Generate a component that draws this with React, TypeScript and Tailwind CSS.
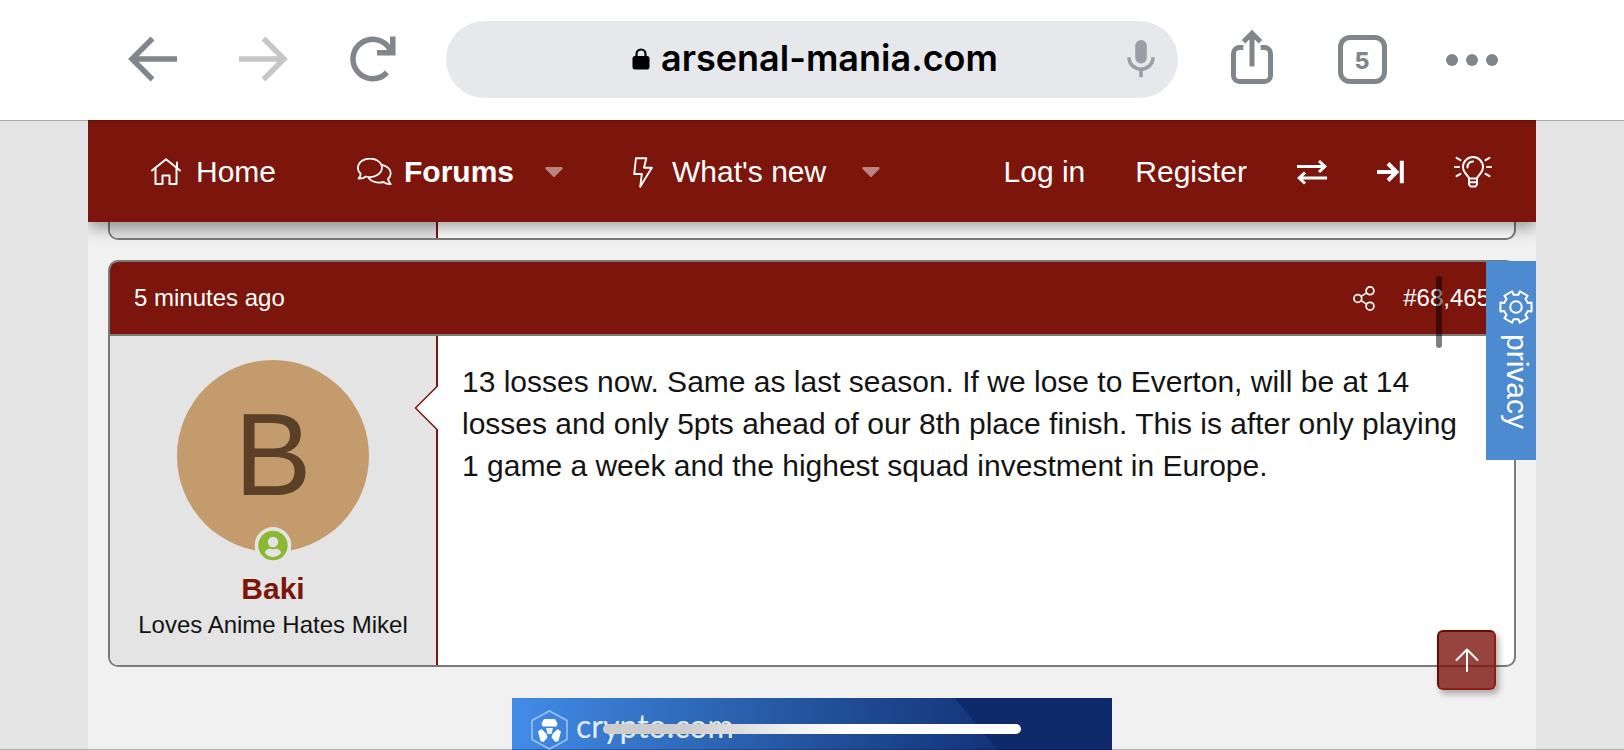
import { useState } from "react";

const MESSAGE =
  "13 losses now. Same as last season. If we lose to Everton, will be at 14 losses and only 5pts ahead of our 8th place finish. This is after only playing 1 game a week and the highest squad investment in Europe.";

// Six-toothed cog outline, one tooth every 60 degrees
const cogPoints = Array.from({ length: 6 })
  .flatMap((_, i) =>
    [
      [12.5, -19],
      [16.2, -16],
      [16.2, 16],
      [12.5, 19],
    ].map(([radius, offset]) => {
      const angle = ((i * 60 + offset) * Math.PI) / 180;
      return `${(17 + radius * Math.cos(angle)).toFixed(2)},${(17 + radius * Math.sin(angle)).toFixed(2)}`;
    })
  )
  .join(" ");

function Caret({ label }: { label: string }) {
  return (
    <button type="button" aria-label={label} className="cursor-pointer">
      <svg width="18" height="11" viewBox="0 0 18 11" fill="#bc8380" className="block">
        <path d="M1.5 0h15a1.2 1.2 0 0 1 .9 2L10 9.6a1.4 1.4 0 0 1-2 0L.6 2a1.2 1.2 0 0 1 .9-2z" />
      </svg>
    </button>
  );
}

function BrowserBar() {
  return (
    <header className="relative z-20 flex h-[120px] shrink-0 items-center bg-white pr-[97px] pb-[2px] pl-[98px] shadow-[0_1px_0_rgba(0,0,0,0.25)]">
      <button type="button" aria-label="Back" className="flex w-[110px] justify-center">
        <svg width="50" height="46" viewBox="0 0 50 46" fill="none" stroke="#80868b" strokeWidth="5.5">
          <path d="M49 23H5M24.5 2.5L4 23l20.5 20.5" />
        </svg>
      </button>
      <button type="button" aria-label="Forward" disabled className="flex w-[110px] justify-center">
        <svg width="50" height="46" viewBox="0 0 50 46" fill="none" stroke="#c6c6c6" strokeWidth="5.5">
          <path d="M1 23h44M25.5 2.5L46 23 25.5 43.5" />
        </svg>
      </button>
      <button type="button" aria-label="Reload" className="flex w-[110px] justify-center">
        <svg width="46" height="46" viewBox="0 0 46 46" fill="none" stroke="#80868b" strokeWidth="5.5">
          <path d="M37 36.5A19.7 19.7 0 1 1 40.5 14.5" />
          <path d="M42.8 0.5v16.2H27" />
        </svg>
      </button>

      <div className="mr-[19px] ml-[18px] grid h-[77px] flex-1 grid-cols-[1fr_auto_1fr] items-center rounded-full bg-[#e7e8ec] pr-[23px] pl-[29px]">
        <span />
        <label className="flex items-center gap-[11px]">
          <svg width="18" height="22" viewBox="0 0 18 22" className="block">
            <rect x="0.5" y="8" width="17" height="13.5" rx="2.5" fill="#000" />
            <path d="M4.5 9V6a4.5 4.5 0 0 1 9 0v3" fill="none" stroke="#000" strokeWidth="2.2" />
          </svg>
          <input
            type="text"
            aria-label="Address"
            defaultValue="arsenal-mania.com"
            className="field-sizing-content bg-transparent pb-[3px] font-['Inter',sans-serif] text-[36px] leading-[46px] font-semibold text-black outline-none"
          />
        </label>
        <button type="button" aria-label="Voice search" className="justify-self-end">
          <svg width="28" height="38" viewBox="0 0 28 38" fill="none" className="block">
            <rect x="8.2" y="0" width="11.6" height="23.4" rx="5.8" fill="#9b9ea6" />
            <path d="M2 17.3C2 24.5 7.5 29 14 29s12-4.5 12-11.7M14 29v8.3" stroke="#9b9ea6" strokeWidth="3.6" />
          </svg>
        </button>
      </div>

      <button type="button" aria-label="Share" className="flex w-[110px] justify-center">
        <svg width="42" height="56" viewBox="0 0 42 56" fill="none" stroke="#80868b" className="mb-1">
          <path d="M12.3 18.5H8.5a6 6 0 0 0-6 6v22a6 6 0 0 0 6 6h25a6 6 0 0 0 6-6v-22a6 6 0 0 0-6-6h-3.8" strokeWidth="5" />
          <path d="M21 37.5V5M12.5 12.7L21 4.2l8.5 8.5" strokeWidth="5" />
        </svg>
      </button>
      <button type="button" aria-label="Open tabs" className="flex w-[110px] justify-center">
        <span className="flex size-[49px] items-center justify-center rounded-[12px] border-[5px] border-[#80868b] pt-1 font-['Inter',sans-serif] text-[23px] leading-6 font-extrabold text-[#80868b]">
          5
        </span>
      </button>
      <button type="button" aria-label="More" className="flex w-[110px] justify-center pt-[2px]">
        <svg width="52" height="12" viewBox="0 0 52 12" fill="#80868b">
          <circle cx="6" cy="6" r="6" />
          <circle cx="26" cy="6" r="6" />
          <circle cx="46" cy="6" r="6" />
        </svg>
      </button>
    </header>
  );
}

function SiteNav() {
  return (
    <nav className="relative z-10 flex h-[102px] items-center bg-[#7c150c] pt-[2px] pr-[44px] pl-[63px] text-[30px] leading-[42px] whitespace-nowrap text-white shadow-[0_5px_16px_rgba(0,0,0,0.4)]">
      <a href="#home" className="flex items-center gap-[15px]">
        <svg width="30" height="28" viewBox="0 0 30 28" fill="none" stroke="#fff" strokeWidth="2" strokeLinecap="round" strokeLinejoin="round">
          <path d="M1 12.5L15 1.2l14 11.3" />
          <path d="M4.5 10v16h7v-8.500h7V26h7V10M26 4.500V9" />
        </svg>
        Home
      </a>
      <a href="#forums" className="ml-[81px] flex items-center gap-3 font-bold">
        <svg width="35" height="28" viewBox="0 0 35 28" fill="none" stroke="#fff" strokeWidth="1.8" strokeLinecap="round" strokeLinejoin="round">
          <path d="M1.5 20.5c1.500-1.500 2.300-3 2-5A12 9.200 0 1 1 9 18.500c-2 1.500-4.500 2.200-7.500 2z" />
          <path d="M25 7c5 1 8.700 4.200 8.700 8.400 0 2.400-1.200 4.200-2.700 5.600.3 2 1.300 3.500 2.700 5-2.700.2-5.200-.6-7.200-2C20 25.500 14 23.700 11.700 20" />
        </svg>
        Forums
      </a>
      <div className="ml-[31px] flex">
        <Caret label="Toggle forums menu" />
      </div>
      <a href="#whats-new" className="ml-[70px] flex items-center gap-[19px]">
        <svg width="20" height="31" viewBox="0 0 20 31" fill="none" stroke="#fff" strokeWidth="1.9" strokeLinejoin="round">
          <path d="M3 1.200h10.300L11 10.700h7.800L7.200 29.800 8.800 17H1.200z" />
        </svg>
        What's new
      </a>
      <div className="ml-9 flex">
        <Caret label="Toggle what's new menu" />
      </div>

      <div className="ml-auto flex items-center gap-[50px]">
        <a href="#login">Log in</a>
        <a href="#register">Register</a>
        <button type="button" aria-label="Switch width">
          <svg width="30" height="25" viewBox="0 0 30 25" fill="none" stroke="#fff" strokeWidth="3" className="block">
            <path d="M0 6.500h28M22 1L27.800 6.500 22 12M30 18H2M8 12.500L2.200 18 8 23.500" />
          </svg>
        </button>
        <button type="button" aria-label="Toggle sidebar">
          <svg width="27" height="24" viewBox="0 0 27 24" fill="none" stroke="#fff" strokeWidth="4" className="block">
            <path d="M0 12h19M11 3.500L19.500 12 11 20.500M24.800 0.800v22.400" />
          </svg>
        </button>
        <button type="button" aria-label="Change style">
          <svg width="38" height="32" viewBox="0 0 38 32" fill="none" stroke="#fff" strokeWidth="2" strokeLinecap="round" strokeLinejoin="round" className="block">
            <path d="M15 22.500c-.5-3-6-5.500-6-11.500a10 10 0 0 1 20 0c0 6-5.500 8.500-6 11.500z" />
            <path d="M15 22.500v6l1.500 2h5l1.500-2v-6M15 26.300h8" />
            <path d="M13.500 11.500c0-3.500 2.200-5.700 5.500-5.900" />
            <path d="M1 11h4M2.500 1.800l4 2.400M2.500 20.200l4-2.400M37 11h-4M35.500 1.800l-4 2.400M35.500 20.200l-4-2.400" />
          </svg>
        </button>
      </div>
    </nav>
  );
}

function PreviousPost() {
  return (
    <div className="flex h-[18px] rounded-b-[10px] border-2 border-t-0 border-[#7b7b7b] bg-white">
      <div className="w-[328px] rounded-bl-lg border-r-2 border-[#7c150c] bg-[#e4e4e4]" />
    </div>
  );
}

function Post() {
  return (
    <article className="mt-5 overflow-hidden rounded-[10px] border-2 border-[#7b7b7b] bg-white">
      <header className="flex h-[74px] items-center justify-between border-b-2 border-[#7b7b7b] bg-[#7c150c] px-6 text-[24px] text-white">
        <time>5 minutes ago</time>
        <div className="flex items-center gap-7">
          <button type="button" aria-label="Share post">
            <svg width="22" height="25" viewBox="0 0 22 25" fill="none" stroke="#fff" strokeWidth="1.7" className="block">
              <circle cx="17" cy="4.8" r="3.9" />
              <circle cx="4.8" cy="12.5" r="3.9" />
              <circle cx="17" cy="20.2" r="3.9" />
              <path d="M8.100 10.400l5.600-3.500M8.100 14.600l5.600 3.500" />
            </svg>
          </button>
          <a href="#post-68465">#68,465</a>
        </div>
      </header>

      <div className="flex">
        <section className="relative flex w-[328px] shrink-0 flex-col items-center border-r-2 border-[#7c150c] bg-[#e4e4e4] py-6">
          <div className="relative">
            <div className="flex size-[192px] items-center justify-center rounded-full bg-[#c49b6c] pb-[2px] text-[116px] leading-none text-[#5a4026]">
              B
            </div>
            <svg
              width="37"
              height="37"
              viewBox="0 0 37 37"
              role="img"
              aria-label="Online now"
              className="absolute -bottom-3 left-1/2 -translate-x-1/2"
            >
              <circle cx="18.5" cy="18.5" r="18.5" fill="#e4e4e4" />
              <circle cx="18.5" cy="18.5" r="14.7" fill="#8ab833" />
              <circle cx="18.5" cy="15" r="5.2" fill="#e4e4e4" />
              <path d="M10.500 26c0-2.600 2.500-4.300 4.700-4.300 1.100 0 2 .5 3.300.5s2.200-.5 3.300-.5c2.200 0 4.700 1.700 4.700 4.300-2 2.500-5 4-8 4s-6-1.500-8-4z" fill="#e4e4e4" />
            </svg>
          </div>
          <a href="#baki" className="mt-[17px] text-[30px] leading-10 font-bold text-[#7c150c]">
            Baki
          </a>
          <p className="text-[24px] leading-8">Loves Anime Hates Mikel</p>

          {/* Speech notch pointing at the avatar */}
          <svg width="24" height="46" viewBox="0 0 24 46" className="absolute top-[49px] -right-[2px]">
            <path d="M24 1L1.500 23 24 45z" fill="#fff" />
            <path d="M23.500 1L1.500 23l22 22" fill="none" stroke="#7c150c" strokeWidth="1.5" />
          </svg>
        </section>
        <p className="flex-1 pt-[25px] pr-10 pb-6 pl-6 text-[30px] leading-[42px]">{MESSAGE}</p>
      </div>
    </article>
  );
}

function AdBanner() {
  return (
    <a
      href="#ad"
      className="relative mx-auto mt-[31px] flex h-[100px] w-[600px] items-start bg-linear-to-r from-[#428ce8] via-[#23539c] via-50% to-[#14347a] to-80% pt-3 pl-[19px]"
    >
      <svg width="157" height="100" viewBox="0 0 157 100" fill="#0f2a6b" className="absolute top-0 right-0">
        <path d="M0 0h157v100H82z" />
      </svg>
      <svg width="37" height="40" viewBox="0 0 37 40" fill="none">
        <path d="M18.500 1L36 10.500v19L18.500 39 1 29.500v-19z" stroke="#9cc2f0" strokeWidth="1.6" />
        <path d="M13 9h11l2.500 4.500-1 3h-14l-1-3z" fill="#fff" />
        <path d="M15 18h7l-1.500 6h-4z" fill="#e8f1fc" />
        <path d="M7 21.500l3.500-2.500 5 5 1 3.500-4 4.500-3-1zM30 21.500L26.500 19l-5 5-1 3.500 4 4.500 3-1z" fill="#fff" />
      </svg>
      <span className="ml-2 font-['Lato',sans-serif] text-[32px] leading-8 text-[#e3edfb]">crypto.com</span>
    </a>
  );
}

export default function App() {
  const [privacyOpen, setPrivacyOpen] = useState(false);

  return (
    <div className="flex h-screen flex-col overflow-hidden bg-[#e4e4e4] font-['Liberation_Sans',Arial,sans-serif] text-[#141414]">
      <BrowserBar />

      <div className="relative mx-[88px] flex-1 overflow-hidden bg-[#f1f1f1]">
        <SiteNav />
        <main className="px-5">
          <PreviousPost />
          <Post />
          <AdBanner />
        </main>

        <button
          type="button"
          aria-expanded={privacyOpen}
          onClick={() => setPrivacyOpen(!privacyOpen)}
          className="absolute top-[141px] right-0 flex h-[199px] w-[50px] flex-col items-center gap-[10px] bg-[#4e8ad0] pt-[29px] pl-3 text-[30px] leading-[36px] text-white"
        >
          <svg width="34" height="34" viewBox="0 0 34 34" fill="none" stroke="#fff" strokeWidth="2" strokeLinejoin="round" className="mr-[2px] shrink-0">
            <polygon points={cogPoints} />
            <circle cx="17" cy="17" r="5.8" />
          </svg>
          <span className="[writing-mode:vertical-rl]">privacy</span>
        </button>

        <div className="absolute top-[156px] right-[94px] h-[72px] w-[6px] rounded-full bg-black/50" />

        <button
          type="button"
          aria-label="Back to top"
          className="absolute right-10 bottom-[60px] flex h-[60px] w-[59px] items-center justify-center rounded-md border-2 border-t-[#630d07] border-r-[#931a10] border-b-[#931a10] border-l-[#630d07] bg-[#7c150c]/80 shadow-[3px_4px_6px_rgba(0,0,0,0.3)]"
        >
          <svg width="24" height="24" viewBox="0 0 24 24" fill="none" stroke="#fff" strokeWidth="2" strokeLinecap="round" strokeLinejoin="round">
            <path d="M12 23V1.500M1.500 12L12 1.500 22.500 12" />
          </svg>
        </button>
      </div>

      <div className="fixed inset-x-0 bottom-0 h-px bg-black/25" />
      <div className="fixed bottom-4 left-1/2 h-[10px] w-[418px] -translate-x-1/2 rounded-full bg-linear-to-r from-[#cdcdcd] from-20% via-[#f0f0f0] via-45% to-white to-60%" />
    </div>
  );
}
